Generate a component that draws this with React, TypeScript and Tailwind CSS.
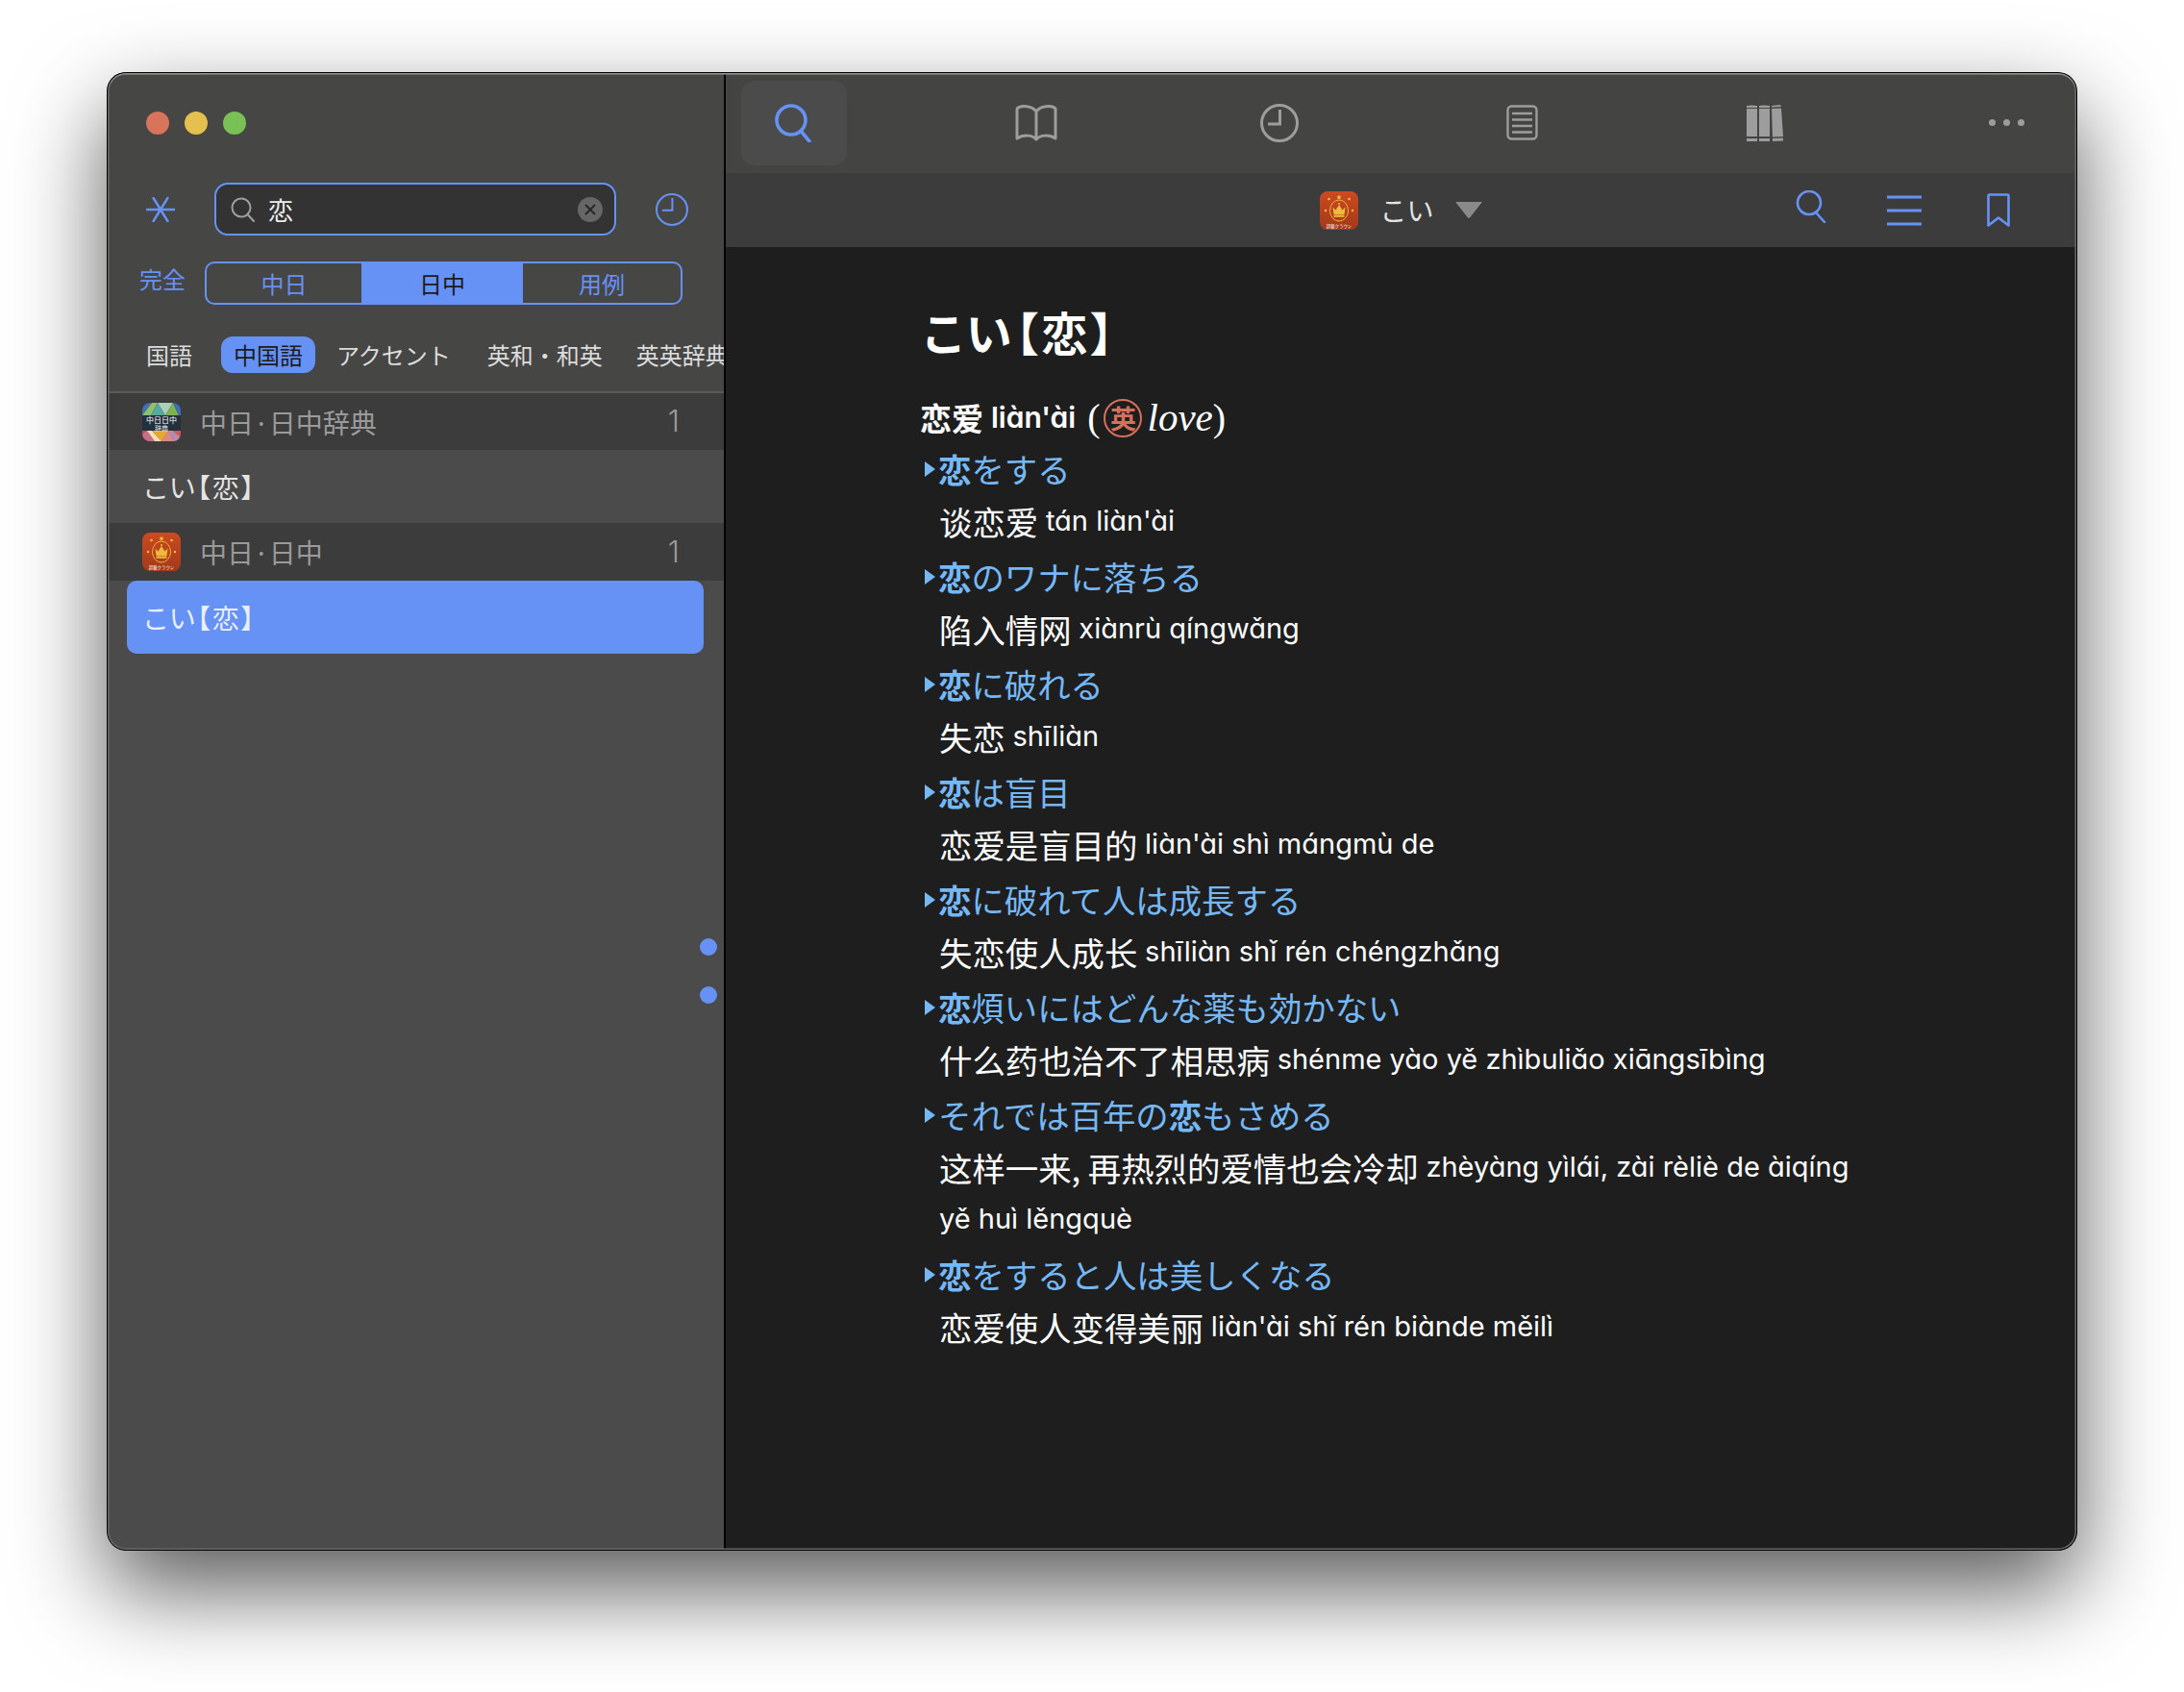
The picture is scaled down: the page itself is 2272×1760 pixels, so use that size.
import React from "react";

const blue = "#6691f5";

const entries = [
  { pre: "", bold: "恋", post: "をする", zh: ["谈恋爱"], py: ["tán liàn'ài"] },
  { pre: "", bold: "恋", post: "のワナに落ちる", zh: ["陷入情网"], py: ["xiànrù qíngwǎng"] },
  { pre: "", bold: "恋", post: "に破れる", zh: ["失恋"], py: ["shīliàn"] },
  { pre: "", bold: "恋", post: "は盲目", zh: ["恋爱是盲目的"], py: ["liàn'ài shì mángmù de"] },
  { pre: "", bold: "恋", post: "に破れて人は成長する", zh: ["失恋使人成长"], py: ["shīliàn shǐ rén chéngzhǎng"] },
  { pre: "", bold: "恋", post: "煩いにはどんな薬も効かない", zh: ["什么药也治不了相思病"], py: ["shénme yào yě zhìbuliǎo xiāngsībìng"] },
  { pre: "それでは百年の", bold: "恋", post: "もさめる", zh: ["这样一来, 再热烈的爱情也会冷却"], py: ["zhèyàng yìlái, zài rèliè de àiqíng", "yě huì lěngquè"] },
  { pre: "", bold: "恋", post: "をすると人は美しくなる", zh: ["恋爱使人变得美丽"], py: ["liàn'ài shǐ rén biànde měilì"] },
];

function Pinyin({ children }: { children: React.ReactNode }) {
  return (
    <span className="[font-family:Inter,sans-serif] [font-feature-settings:'cv11'] text-[29px] relative top-[-1px]">{children}</span>
  );
}

function ClockIcon({ size, stroke, color }: { size: number; stroke: number; color: string }) {
  return (
    <svg width={size} height={size} viewBox="0 0 40 40" fill="none" stroke={color} strokeWidth={stroke}>
      <circle cx="20" cy="20" r={20 - stroke / 2} />
      <path d="M20.500 6v15H8" />
    </svg>
  );
}

function DictIcon() {
  return (
    <svg width="40" height="40" viewBox="0 0 40 40" className="rounded-[8px] shrink-0">
      <rect width="40" height="40" fill="#23303d" />
      <path d="M0 0h10L0 13z" fill="#3f74b0" />
      <path d="M0 13L10 0h6L9 13z" fill="#8fc06a" />
      <path d="M9 13L16 0l8 13z" fill="#56a8a0" />
      <path d="M16 0h16l-8 13z" fill="#a9d0b8" />
      <path d="M24 13L32 0l6 13z" fill="#7fb24f" />
      <path d="M32 0h8v13h-2z" fill="#3f6fb5" />
      <rect y="29" width="40" height="11" fill="#c0504a" />
      <path d="M0 40V33L5 29l8 11z" fill="#c76e8a" />
      <path d="M5 29h5l10 11H13z" fill="#f0e0b8" />
      <path d="M10 29h17l-7 11z" fill="#e5a92f" />
      <path d="M27 29l6 11H20z" fill="#d98a86" />
      <path d="M27 29h5l8 7v4h-7z" fill="#b48cb0" />
      <path d="M32 29h8v7z" fill="#cc5a52" />
      <text x="20" y="21" textAnchor="middle" fontSize="8" fill="#fff" className="[font-family:'Noto_Sans_CJK_JP',serif]">中日日中</text>
      <text x="20" y="28.500" textAnchor="middle" fontSize="7" fill="#e8e8e8" className="[font-family:'Noto_Sans_CJK_JP',serif]">辞典</text>
    </svg>
  );
}

function CrownIcon() {
  return (
    <svg width="40" height="40" viewBox="0 0 40 40" className="rounded-[8px] shrink-0">
      <defs>
        <linearGradient id="crownBg" x1="0" y1="0" x2="0" y2="1">
          <stop offset="0" stopColor="#cc4a20" />
          <stop offset="1" stopColor="#a2391a" />
        </linearGradient>
      </defs>
      <rect width="40" height="40" fill="url(#crownBg)" />
      <ellipse cx="20" cy="20" rx="9.500" ry="11" fill="none" stroke="#e8b53a" strokeWidth="1" />
      <path d="M14.500 24.500l-1-8 3 3 3.500-5.500 3.500 5.500 3-3-1 8z" fill="#eeb93d" />
      <rect x="14.500" y="25" width="11" height="1.800" fill="#eeb93d" />
      <circle cx="20" cy="13" r="1" fill="#eeb93d" />
      <path d="M20 3.500l.8 1.800 1.800.2-1.400 1.200.5 1.800-1.700-1-1.700 1 .5-1.800-1.400-1.200 1.800-.2z" fill="#f0c040" />
      <circle cx="9.500" cy="8" r="1.300" fill="#f0c040" />
      <circle cx="30.500" cy="8" r="1.300" fill="#f0c040" />
      <circle cx="6" cy="20" r="1.200" fill="#f0c040" />
      <circle cx="34" cy="20" r="1.200" fill="#f0c040" />
      <text x="20" y="37.500" textAnchor="middle" fontSize="4.400" fill="#fff" className="[font-family:'Noto_Sans_CJK_JP',sans-serif]">超級クラウン</text>
    </svg>
  );
}

function Sidebar() {
  return (
    <aside className="w-[644px] shrink-0 h-full flex flex-col bg-[#4b4b4b] border-r-2 border-black overflow-hidden relative">
      <div className="h-[334px] shrink-0 bg-[#464645] border-b-2 border-[#5a5a5a] flex flex-col">
        <div className="flex gap-4 pl-[41px] pt-[41px]">
          <span className="w-6 h-6 rounded-full bg-[#d8735c]"></span>
          <span className="w-6 h-6 rounded-full bg-[#e6c04f]"></span>
          <span className="w-6 h-6 rounded-full bg-[#79c156]"></span>
        </div>

        <div className="flex items-center pl-[41px] mt-[50px] h-[55px]">
          <svg width="30" height="26" viewBox="0 0 30 26" fill="none" stroke={blue} strokeWidth="2.500" className="shrink-0">
            <path d="M0 13h30M7 26L15 13 23 26M7 0L15 13 23 0" />
          </svg>
          <div className="ml-[41px] w-[418px] h-[55px] rounded-[14px] border-2 border-[#6691f5] bg-[#333333] flex items-center pl-[15px] pr-[12px]">
            <svg width="26" height="26" viewBox="0 0 26 26" fill="none" stroke="#a0a0a0" strokeWidth="2" className="shrink-0">
              <circle cx="11" cy="11" r="9.500" />
              <path d="M17.500 18l6.500 7" strokeLinecap="round" />
            </svg>
            <span className="ml-[13px] text-[26px] text-[#eeeeee] flex-1">恋</span>
            <span className="w-[26px] h-[26px] rounded-full bg-[#666666] flex items-center justify-center">
              <svg width="14" height="14" viewBox="0 0 14 14" fill="none" stroke="#262626" strokeWidth="1.800">
                <path d="M2 2l10 10M12 2L2 12" />
              </svg>
            </span>
          </div>
          <span className="ml-[41px]">
            <ClockIcon size={34} stroke={2.4} color={blue} />
          </span>
        </div>

        <div className="flex items-center pl-[34px] mt-[27px] h-[45px]">
          <span className="w-[48px] text-[24px] leading-none text-[#6691f5] pb-[9px]">完全</span>
          <div className="ml-[20px] w-[497px] h-[45px] rounded-[10px] border-2 border-[#6691f5] flex overflow-hidden text-[24px] leading-none">
            <span className="w-[161px] flex items-center justify-center text-[#6691f5]">中日</span>
            <span className="w-[168px] flex items-center justify-center bg-[#6691f5] text-[#1c1c1c]">日中</span>
            <span className="flex-1 flex items-center justify-center text-[#6691f5]">用例</span>
          </div>
        </div>

        <div className="flex items-center pl-[41px] mt-[33px] h-[38px] text-[24px] text-[#dcdcdc] whitespace-nowrap">
          <span>国語</span>
          <span className="ml-[30px] h-[38px] px-[13px] rounded-[12px] bg-[#6691f5] text-[#1c1c1c] flex items-center">中国語</span>
          <span className="ml-[22px]">アクセント</span>
          <span className="ml-[38px]">英和・和英</span>
          <span className="ml-[35px]">英英辞典</span>
        </div>
      </div>

      <div className="h-[59px] shrink-0 bg-[#3c3c3c] flex items-center pl-[37px] pr-[46px]">
        <DictIcon />
        <span className="ml-[20px] flex-1 text-[28px] text-[#9a9a9a] [font-feature-settings:'palt']">中日·日中辞典</span>
        <span className="text-[31px] font-light text-[#9a9a9a] [font-family:Inter,sans-serif]">1</span>
      </div>
      <div className="h-[76px] shrink-0 flex items-center pl-[39px] text-[28px] tracking-[2px] text-[#e4e4e4] [font-feature-settings:'palt']">こい【恋】</div>
      <div className="h-[60px] shrink-0 bg-[#3c3c3c] flex items-center pl-[37px] pr-[46px]">
        <CrownIcon />
        <span className="ml-[20px] flex-1 text-[28px] text-[#9a9a9a] [font-feature-settings:'palt']">中日·日中</span>
        <span className="text-[31px] font-light text-[#9a9a9a] [font-family:Inter,sans-serif]">1</span>
      </div>
      <div className="mx-[21px] h-[76px] shrink-0 rounded-[10px] bg-[#6691f5] flex items-center pl-[18px] text-[28px] tracking-[2px] text-[#e8f0ff] [font-feature-settings:'palt']">こい【恋】</div>

      {/* scroll markers */}
      <span className="absolute left-[617px] top-[901px] w-[18px] h-[18px] rounded-full bg-[#6691f5]"></span>
      <span className="absolute left-[617px] top-[951px] w-[18px] h-[18px] rounded-full bg-[#6691f5]"></span>
    </aside>
  );
}

function Toolbar() {
  const gray = "#9d9d9d";
  return (
    <div className="h-[105px] shrink-0 bg-[#444443] flex items-center justify-between pl-[16px] pr-[18px]">
      <div className="w-[110px] h-[88px] rounded-[14px] bg-[#4b4b4b] flex items-center justify-center">
        <svg width="40" height="40" viewBox="0 0 40 40" fill="none" stroke={blue} strokeWidth="3.600" strokeLinecap="round">
          <circle cx="17" cy="17" r="15" />
          <path d="M27 28l9 11" />
        </svg>
      </div>
      <div className="w-[110px] flex justify-center">
        <svg width="44" height="38" viewBox="0 0 44 38" fill="none" stroke={gray} strokeWidth="3" strokeLinejoin="round">
          <path d="M22 7C18 1 6 0 2 4V35C8 31 18 31 22 36C26 31 36 31 42 35V4C38 0 26 1 22 7V36" />
        </svg>
      </div>
      <div className="w-[110px] flex justify-center">
        <ClockIcon size={40} stroke={3} color={gray} />
      </div>
      <div className="w-[110px] flex justify-center">
        <svg width="33" height="37" viewBox="0 0 33 37" fill="none" stroke={gray} strokeWidth="2.400">
          <rect x="1.500" y="1.500" width="30" height="34" rx="4" />
          <path d="M6 9h21M6 15.500h21M6 22h21M6 28.500h21" />
        </svg>
      </div>
      <div className="w-[110px] flex justify-center">
        <svg width="38" height="38" viewBox="0 0 38 38" fill={gray}>
          <path d="M0 4h11v29H0zM13 4h11v29H13zM26 4l10-.5L38 33l-11 .5z" />
          <path d="M0 1q5-1 11 0v2H0zM13 1q5-1 11 0v2H13zM26 1l9-1 1 2-10 .5zM0 35h11v3H0zM13 35h11v3H13zM27 35l11-.5v3L27 38z" />
        </svg>
      </div>
      <div className="w-[110px] flex justify-center gap-[8px]">
        <span className="w-[7px] h-[7px] rounded-full bg-[#9d9d9d]"></span>
        <span className="w-[7px] h-[7px] rounded-full bg-[#9d9d9d]"></span>
        <span className="w-[7px] h-[7px] rounded-full bg-[#9d9d9d]"></span>
      </div>
    </div>
  );
}

function DictBar() {
  return (
    <div className="h-[77px] shrink-0 bg-[#3c3c3c] grid grid-cols-3 items-center">
      <div></div>
      <div className="flex items-center justify-center">
        <CrownIcon />
        <span className="ml-[22px] text-[28px] text-[#e4e4e4] relative top-[-1px]">こい</span>
        <svg width="30" height="17" viewBox="0 0 30 17" fill="#8a8a8a" className="ml-[21px]">
          <path d="M1 0h28l-13 16.500q-1 .5-2 0z" />
        </svg>
      </div>
      <div className="flex items-center justify-end pr-[70px]">
        <svg width="32" height="34" viewBox="0 0 32 34" fill="none" stroke={blue} strokeWidth="2.600" strokeLinecap="round" className="-mt-[8px]">
          <circle cx="14" cy="13" r="12" />
          <path d="M21 23l9 10" />
        </svg>
        <svg width="36" height="32" viewBox="0 0 36 32" fill="none" stroke={blue} strokeWidth="3" className="ml-[63px]">
          <path d="M0 2h36M0 16h36M0 30h36" />
        </svg>
        <svg width="24" height="35" viewBox="0 0 24 35" fill="none" stroke={blue} strokeWidth="2.600" strokeLinejoin="round" className="ml-[68px]">
          <path d="M1.500 33.500V2.500q0-1 1-1h19q1 0 1 1v31L12 25.500z" />
        </svg>
      </div>
    </div>
  );
}

function Article() {
  return (
    <div className="flex-1 bg-[#1e1e1e] pl-[202px] text-white">
      <h1 className="pt-[53px] pl-[4px] text-[48px] leading-[68px] tracking-[3.500px] font-bold [font-feature-settings:'palt'] [font-family:'Noto_Sans_CJK_JP',sans-serif]">こい【恋】</h1>
      <div className="mt-[29px] h-[52px] pt-[3px] flex items-center text-[33px] whitespace-nowrap [font-family:'Noto_Sans_CJK_SC',sans-serif]">
        <span className="font-bold">恋爱</span>
        <span className="ml-[8px] font-semibold [font-family:Inter,sans-serif] [font-feature-settings:'cv11'] text-[30px]">liàn'ài</span>
        <span className="ml-[12px] [font-family:'Liberation_Serif',serif] text-[40px]">(</span>
        <span className="ml-[4px] w-[40px] h-[40px] rounded-full border-2 border-[#d4705c] flex items-center justify-center text-[27px] leading-none font-bold text-[#d4705c] [font-family:'Noto_Sans_CJK_JP',sans-serif]">英</span>
        <span className="ml-[5px] italic [font-family:'Liberation_Serif',serif] text-[41px]">love</span>
        <span className="[font-family:'Liberation_Serif',serif] text-[40px]">)</span>
      </div>
      {entries.map((e, i) => (
        <div key={i}>
          <div className="h-[58px] flex items-center pl-[5px] text-[34.400px] text-[#75b8f5] whitespace-nowrap [font-family:'Noto_Sans_CJK_JP',sans-serif]">
            <svg width="11" height="16" viewBox="0 0 11 16" fill="#75b8f5" className="shrink-0 mr-[3px]">
              <path d="M0 0l11 8-11 8z" />
            </svg>
            <span>
              {e.pre}
              <b className="font-bold">{e.bold}</b>
              {e.post}
            </span>
          </div>
          {e.py.map((p, j) => (
            <div key={j} className="h-[54px] flex items-center pl-[20px] pb-[2px] text-[34.400px] whitespace-pre [font-family:'Noto_Sans_CJK_SC',sans-serif]">
              {e.zh[j] ? <span>{e.zh[j]} </span> : null}
              <Pinyin>{p}</Pinyin>
            </div>
          ))}
        </div>
      ))}
    </div>
  );
}

export default function App() {
  return (
    <div className="w-[2272px] h-[1760px] bg-white overflow-hidden pl-[111px] pt-[75px] [font-family:'Noto_Sans_CJK_JP','Noto_Sans_CJK_SC',sans-serif]">
      <div className="relative w-[2050px] h-[1538px] rounded-[20px] flex overflow-hidden shadow-[0_40px_95px_0_rgba(0,0,0,0.65)]">
        <Sidebar />
        <main className="flex-1 h-full flex flex-col min-w-0">
          <Toolbar />
          <DictBar />
          <Article />
        </main>
        {/* window edge sits over the content */}
        <div className="absolute inset-0 z-10 rounded-[20px] border border-black pointer-events-none shadow-[inset_0_1.500px_0_0_#909090,inset_0_0_0_1.500px_#686868]"></div>
      </div>
    </div>
  );
}
